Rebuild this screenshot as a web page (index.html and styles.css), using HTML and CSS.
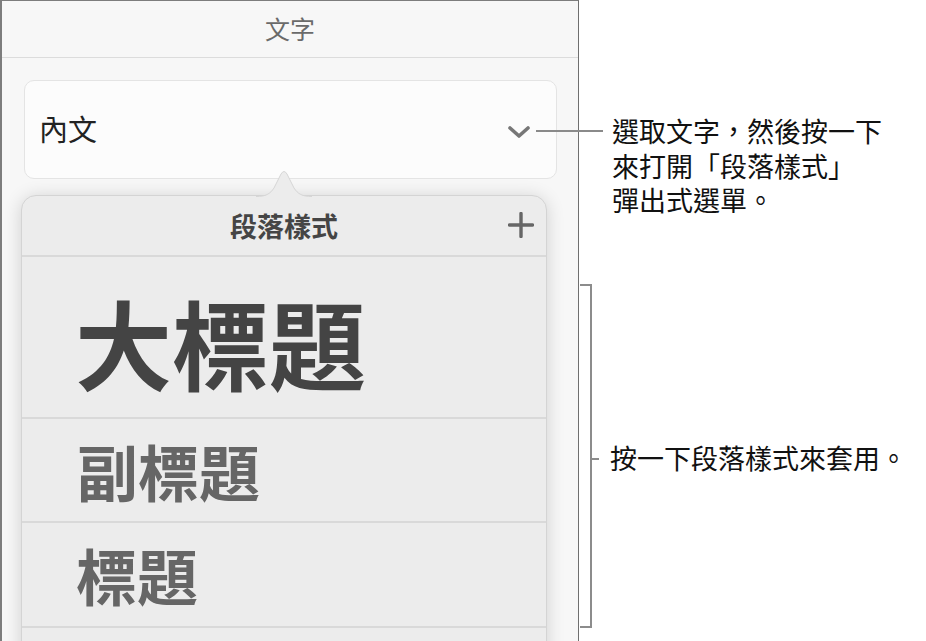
FILE: index.html
```html
<!DOCTYPE html>
<html lang="zh-Hant">
<head>
<meta charset="utf-8">
<title>段落樣式</title>
<link rel="stylesheet" href="styles.css">
</head>
<body>
<div class="page">
  <section class="panel">
    <header class="panel-header">文字</header>
    <div class="dropdown">
      <span class="dropdown-label">內文</span>
      <svg class="chevron" width="24" height="14" viewBox="0 0 24 14"><path d="M3 3 L12 11 L21 3" fill="none" stroke="#777" stroke-width="3.6" stroke-linecap="round" stroke-linejoin="round"/></svg>
    </div>
    <div class="popover">
      <svg class="popover-arrow" width="56" height="27" viewBox="0 0 56 27">
        <path d="M0 27 L0 26.5 C10 26.5 14 24 18 18 L25 4 Q28 -1 31 4 L38 18 C42 24 46 26.5 56 26.5 L56 27 Z" fill="#ececec"/>
        <path d="M0 26.5 C10 26.5 14 24 18 18 L25 4 Q28 -1 31 4 L38 18 C42 24 46 26.5 56 26.5" fill="none" stroke="#d6d6d6" stroke-width="1"/>
      </svg>
      <div class="popover-header">
        <span class="popover-title">段落樣式</span>
        <svg class="plus" width="26" height="26" viewBox="0 0 26 26"><path d="M13 1.5 V24.5 M1.5 13 H24.5" stroke="#666" stroke-width="3.4" stroke-linecap="round"/></svg>
      </div>
      <div class="style-row row-title">大標題</div>
      <div class="style-row row-sub">副標題</div>
      <div class="style-row row-heading">標題</div>
      <div class="style-row row-next"></div>
    </div>
  </section>
  <aside class="notes">
    <div class="callout">
      <span class="leader"></span>
      <p class="note-text">選取文字，然後按一下<br>來打開「段落樣式」<br>彈出式選單。</p>
    </div>
    <div class="bracket-note">
      <span class="bracket"></span>
      <div class="bracket-label">
        <span class="tick"></span>
        <p class="note-text">按一下段落樣式來套用。</p>
      </div>
    </div>
  </aside>
</div>
</body>
</html>
```

FILE: styles.css
```css
* { box-sizing: border-box; }
html, body {
  margin: 0;
  padding: 0;
  background: #ffffff;
}
body {
  font-family: "Noto Sans CJK TC", "Noto Sans", sans-serif;
}
.page {
  display: flex;
  width: 926px;
  height: 641px;
  overflow: hidden;
}
.panel {
  flex: 0 0 579px;
  height: 700px;
  background: #f7f7f7;
  border-top: 1px solid #7d7d7d;
  border-left: 2px solid #7d7d7d;
  border-right: 1px solid #6f6f6f;
  display: flex;
  flex-direction: column;
}
.panel-header {
  height: 57px;
  border-bottom: 1px solid #dcdcdc;
  display: flex;
  align-items: center;
  justify-content: center;
  font-size: 25px;
  color: #6a6a6a;
  padding-bottom: 2px;
}
.dropdown {
  margin: 22px 0 0 22px;
  width: 533px;
  height: 99px;
  background: #fcfcfc;
  border: 1px solid #e4e4e4;
  border-radius: 10px;
  display: flex;
  align-items: center;
  justify-content: space-between;
  padding: 0 25px 0 14px;
}
.dropdown-label {
  font-size: 29px;
  color: #222;
  line-height: 1;
  padding-bottom: 2px;
}
.chevron { display: block; margin-top: 4px; }
.popover {
  position: relative;
  margin: 16px 0 0 19px;
  width: 526px;
  flex: 1;
  background: #ececec;
  border: 1px solid #d4d4d4;
  border-radius: 15px 15px 0 0;
  box-shadow: 0 2px 18px rgba(0, 0, 0, 0.16);
}
.popover-arrow {
  position: absolute;
  top: -26px;
  left: 234px;
  display: block;
}
.popover-header {
  position: relative;
  height: 61px;
  border-bottom: 2px solid #d9d9d9;
  display: flex;
  align-items: center;
  justify-content: center;
}
.popover-title {
  font-size: 27px;
  font-weight: 700;
  color: #454545;
  line-height: 1;
}
.plus {
  position: absolute;
  right: 12px;
  top: 16px;
}
.style-row {
  display: flex;
  align-items: center;
  border-bottom: 2px solid #d9d9d9;
  font-weight: 700;
  line-height: 1;
  padding-left: 53px;
}
.row-title {
  height: 162px;
  font-size: 97px;
  color: #444;
  padding-top: 6px;
}
.row-sub {
  height: 104px;
  font-size: 61px;
  color: #666;
  padding-left: 55px;
}
.row-heading {
  height: 105px;
  font-size: 61px;
  color: #666;
  padding-left: 54px;
}
.row-next {
  height: 60px;
  border-bottom: none;
}
.notes {
  flex: 1;
  display: flex;
  flex-direction: column;
  padding-top: 114px;
}
.callout {
  position: relative;
  display: flex;
  align-items: flex-start;
  margin-left: -43px;
}
.leader {
  flex: 0 0 67px;
  height: 2px;
  margin-top: 16px;
  background: #8a8a8a;
}
.note-text {
  margin: 0 0 0 9px;
  font-size: 27px;
  line-height: 34.5px;
  color: #111;
}
.bracket-note {
  display: flex;
  margin-top: 66px;
  margin-left: 1px;
}
.bracket {
  flex: 0 0 12px;
  height: 344px;
  border: 2px solid #8c8c8c;
  border-left: none;
}
.bracket-label {
  display: flex;
  align-items: center;
  padding-top: 6px;
}
.tick {
  flex: 0 0 7px;
  height: 2px;
  background: #8c8c8c;
}
.bracket-label .note-text {
  margin-left: 11px;
}
```
